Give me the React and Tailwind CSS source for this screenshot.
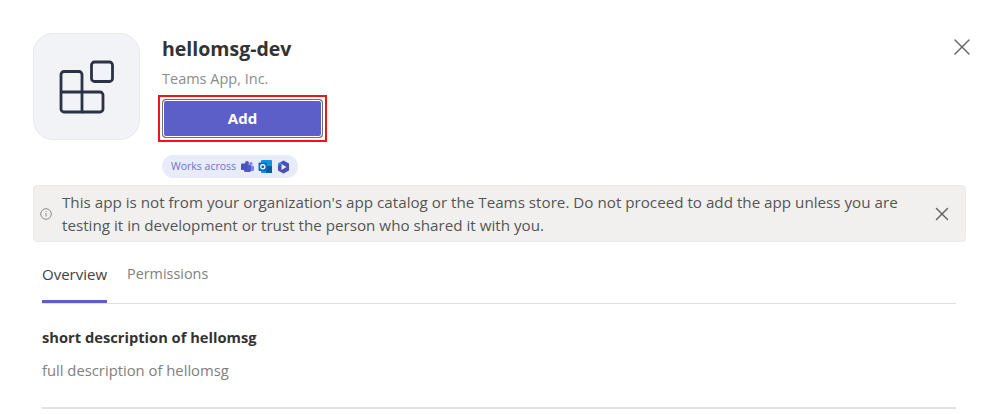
import { X } from "lucide-react";

const font = { fontFamily: '"Open Sans", "Noto Sans", sans-serif' };

const AppGlyph = () => (
    <svg width="56" height="56" viewBox="0 0 56 56" fill="none" stroke="#2b3245" strokeWidth="2.8">
        <rect x="32.5" y="3" width="21" height="19.5" rx="3" />
        <path d="M5 12.5h15a3 3 0 0 1 3 3v37.5h-18a3 3 0 0 1-3-3v-34.5a3 3 0 0 1 3-3z" />
        <path d="M2 33h39a3 3 0 0 1 3 3v14a3 3 0 0 1-3 3h-18" />
    </svg>
);

const TeamsIcon = () => (
    <svg width="13" height="12" viewBox="0 0 13 12">
        <circle cx="10" cy="2.5" r="1.6" fill="#7b83eb" />
        <rect x="7" y="4.5" width="6" height="5.5" rx="1.5" fill="#7b83eb" />
        <circle cx="6" cy="2" r="2" fill="#5059c9" />
        <rect x="3" y="3.5" width="7" height="7.5" rx="1.5" fill="#5059c9" />
        <rect x="0" y="2.5" width="6.5" height="6.5" rx="1" fill="#4b53bc" />
    </svg>
);

const OutlookIcon = () => (
    <svg width="15" height="15" viewBox="0 0 15 15">
        <rect x="3" y="1" width="11" height="13" rx="1" fill="#1490df" />
        <rect x="8" y="7" width="6" height="7" fill="#0f5a9c" />
        <rect x="0.5" y="3.5" width="8.5" height="8.5" rx="1" fill="#0f6cbd" />
        <circle cx="4.8" cy="7.8" r="2.1" fill="none" stroke="#ffffff" strokeWidth="1.2" />
    </svg>
);

const CopilotIcon = () => (
    <svg width="13" height="14" viewBox="0 0 13 14">
        <path d="M6.5 0.5 12 3.6v6.8L6.5 13.5 1 10.4V3.6z" fill="#4a4fb5" />
        <path d="M4.5 4 9.5 7l-5 3z" fill="#e8eafa" />
        <path d="M1 3.6 4.5 2v2L1 6z" fill="#2f8fd8" />
    </svg>
);

const App = () => {

    return (

        <div className="relative h-[414px] w-[1000px] overflow-hidden bg-white" style={font}>

            {/* Header */}

            <div className="flex gap-[22px] pl-[33px] pt-[33px]">

                <div className="flex h-[107px] w-[107px] items-center justify-center rounded-[20px] border border-[#e8e9ec] bg-[#f2f3f6]">
                    <AppGlyph />
                </div>

                <div className="mt-[1px] flex flex-col items-start">

                    <h1 className="text-[19.5px] font-bold leading-[30px] text-[#333333]">hellomsg-dev</h1>

                    <p className="mt-[1px] text-[14.5px] leading-[28px] text-[#8c8c8c]">Teams App, Inc.</p>

                    <div className="-ml-[4px] mt-[2px] border-2 border-[#f01414] p-[3px]">
                        <button className="flex h-[37px] w-[159px] items-center justify-center rounded-[3px] border border-white bg-[#5b5fc7] text-[15px] font-bold text-white shadow-[0_0_0_1px_#6e6e6e]">
                            Add
                        </button>
                    </div>

                    <div className="mt-[13px] flex h-[23px] w-[136px] items-center gap-[4px] rounded-full bg-[#e8ebfa] pl-[9px]">
                        <span className="mr-[1px] text-[10.5px] text-[#6f73c4]">Works across</span>
                        <TeamsIcon />
                        <OutlookIcon />
                        <CopilotIcon />
                    </div>

                </div>

            </div>

            <X className="absolute left-[948px] top-[33px] text-[#666666]" size={28} strokeWidth={1.2} />

            {/* Warning banner */}

            <div className="ml-[33px] mt-[7px] flex h-[57px] w-[933px] items-center rounded-[4px] border border-[#ebeae8] bg-[#f1f0ee]">

                <svg className="ml-[6px] shrink-0" width="12" height="12" viewBox="0 0 12 12" fill="none" stroke="#8a8a8a" strokeWidth="1">
                    <circle cx="6" cy="6" r="5.3" />
                    <path d="M6 5.2v3.4M6 3.2v1" />
                </svg>

                <p className="ml-[10px] w-[850px] text-[15.2px] leading-[23px] text-[#555555]">
                    This app is not from your organization's app catalog or the Teams store. Do not proceed to add the app unless you are testing it in development or trust the person who shared it with you.
                </p>

                <X className="ml-[19px] text-[#666666]" size={22} strokeWidth={1.6} />

            </div>

            {/* Tabs */}

            <div className="ml-[42px] mt-[18px] flex w-[914px] gap-[20px] border-b border-[#e0e0e0] text-[14.4px]">

                <div className="h-[43px] w-[65px] border-b-[3px] border-[#5b5fc7] pt-[3px] text-[15px] text-[#424242]">Overview</div>

                <div className="pt-[3px] text-[#808080]">Permissions</div>

            </div>

            {/* Description */}

            <div className="ml-[42px] w-[914px]">

                <h2 className="mt-[21px] text-[14.7px] font-bold leading-[24px] text-[#333333]">short description of hellomsg</h2>

                <p className="mt-[9px] text-[14.8px] leading-[24px] text-[#808080]">full description of hellomsg</p>

                <div className="mt-[25px] border-t-2 border-[#e2e2e2]" />

            </div>

        </div>

    );

};

export default App;
